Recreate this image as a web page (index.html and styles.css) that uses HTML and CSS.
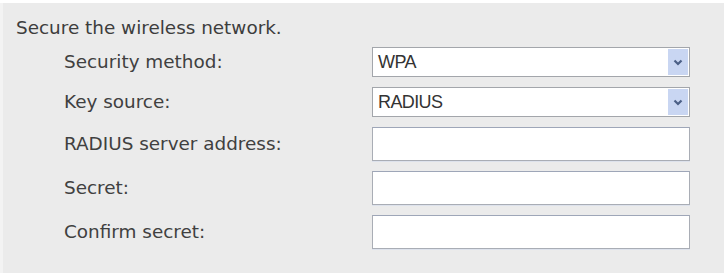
FILE: index.html
```html
<!DOCTYPE html>
<html>
<head>
<meta charset="utf-8">
<link rel="stylesheet" href="styles.css">
</head>
<body>
<div class="panel">
  <div class="heading">Secure the wireless network.</div>
  <div class="form">
    <div class="label">Security method:</div>
    <div class="select"><span class="value">WPA</span><span class="arrow"><svg width="10" height="7" viewBox="0 0 10 7"><path d="M1.5 1.5 L5 5 L8.5 1.5" fill="none" stroke="#4b5f86" stroke-width="2.2"/></svg></span></div>
    <div class="label">Key source:</div>
    <div class="select"><span class="value">RADIUS</span><span class="arrow"><svg width="10" height="7" viewBox="0 0 10 7"><path d="M1.5 1.5 L5 5 L8.5 1.5" fill="none" stroke="#4b5f86" stroke-width="2.2"/></svg></span></div>
    <div class="label">RADIUS server address:</div>
    <input class="field" type="text">
    <div class="label">Secret:</div>
    <input class="field" type="text">
    <div class="label">Confirm secret:</div>
    <input class="field" type="text">
  </div>
</div>
</body>
</html>
```
FILE: styles.css
```css
html, body {
  margin: 0;
  padding: 0;
  background: #ffffff;
}
.panel {
  margin-top: 3px;
  height: 270px;
  box-sizing: border-box;
  background: #ebebeb;
  border-left: 3px solid #f3f3f3;
  padding: 14px 0 0 13px;
  font-family: "DejaVu Sans", Verdana, sans-serif;
  font-size: 18.4px;
  color: #3d3d3d;
}
.heading {
  line-height: 22px;
  height: 22px;
}
.form {
  margin-top: 8px;
  margin-left: 48px;
  display: grid;
  grid-template-columns: 308px 318px;
  grid-template-rows: 30px 30px 34px 34px 34px;
  row-gap: 10px;
  align-items: center;
}
.label {
  line-height: 22px;
  color: #404040;
}
.select {
  height: 30px;
  box-sizing: border-box;
  border: 1px solid #a3a6ab;
  background: #ffffff;
  display: flex;
  align-items: center;
  justify-content: space-between;
  padding: 1px 1px 1px 5px;
}
.value {
  font-family: "Liberation Sans", Arial, sans-serif;
  font-size: 18px;
  letter-spacing: -0.6px;
  color: #333333;
}
.arrow {
  width: 20px;
  height: 26px;
  background: #c9d6f2;
  display: flex;
  align-items: center;
  justify-content: center;
}
.field {
  height: 34px;
  width: 318px;
  box-sizing: border-box;
  margin: 0;
  border: 1px solid #a9adb5;
  border-top-color: #9ea6b8;
  background: #ffffff;
  box-shadow: 0 1px 0 #dde2ec;
  outline: none;
}
```
